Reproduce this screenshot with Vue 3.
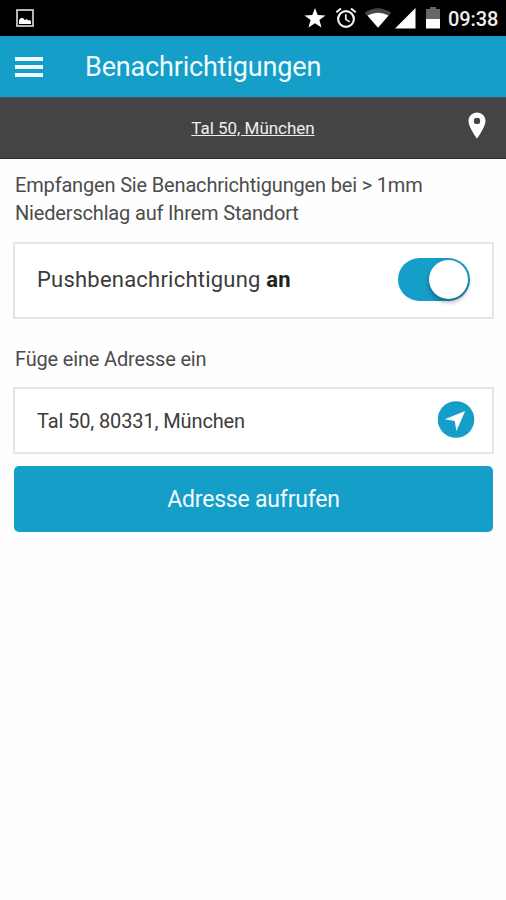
<script setup>
import { ref, computed } from 'vue';

const pushEnabled = ref(true);
const address = ref('Tal 50, 80331, München');

const pushState = computed(() => (pushEnabled.value ? 'an' : 'aus'));

function togglePush() {
  pushEnabled.value = !pushEnabled.value;
}
</script>

<template>
  <div class="screen">
    <div class="status-bar">
      <svg class="picture" width="18" height="18" viewBox="0 0 18 18">
        <rect x="1" y="1" width="16" height="16" fill="none" stroke="#c8c8c8" stroke-width="1.8" />
        <path d="M3 15v-4l2-2h2l2 2.200L10.500 10l2 1.500 1.500-.5 1 1.200V15z" fill="#fff" />
      </svg>
      <div class="status-icons">
        <svg class="star" width="22" height="20" viewBox="0 0 22 20">
          <path d="M11 0l2.700 7.100 7.800.3-6.100 4.700 2.100 7.400L11 15.300l-6.500 4.200 2.100-7.400L.5 7.400l7.800-.3z" fill="#fff" />
        </svg>
        <svg class="alarm" width="22" height="22" viewBox="0 0 22 22" fill="none" stroke="#f0f0f0">
          <circle cx="11" cy="12" r="7.900" stroke-width="2.200" />
          <path d="M1.300 5.300L6 1.400M20.700 5.300L16 1.400" stroke-width="2" />
          <path d="M10.800 7.200v5.200l3.900 2.500" stroke-width="1.700" />
        </svg>
        <svg class="wifi" width="28" height="20" viewBox="0 0 28 20">
          <path d="M.7 4.800Q14-4.300 27.300 4.800L14 19.500z" fill="#484848" />
          <path d="M3.500 7.600Q14 2 24.500 7.600L14 19.800z" fill="#fff" />
        </svg>
        <svg class="signal" width="21" height="21" viewBox="0 0 21 21">
          <path d="M20.500 0v20.500H0z" fill="#fff" />
        </svg>
        <svg class="battery" width="14" height="22" viewBox="0 0 14 22">
          <path d="M0 2h4V0h6v2h4v10H0z" fill="#666" />
          <path d="M0 12h14v9.500H0z" fill="#fff" />
        </svg>
        <span class="clock">09:38</span>
      </div>
    </div>

    <header class="app-bar">
      <button class="menu">
        <span></span>
        <span></span>
        <span></span>
      </button>
      <h1>Benachrichtigungen</h1>
    </header>

    <div class="location-bar">
      <a class="location">Tal 50, München</a>
      <svg class="pin" width="18" height="27" viewBox="0 0 18 27">
        <path d="M9 .5C4.200.5.500 4.200.500 8.900.500 15 9 26.500 9 26.500S17.500 15 17.500 8.900C17.500 4.200 13.800.5 9 .5zm0 5.200a3.200 3.200 0 1 1 0 6.400 3.200 3.200 0 0 1 0-6.400z" fill="#fff" />
      </svg>
    </div>

    <main>
      <p class="intro">
        Empfangen Sie Benachrichtigungen bei &gt; 1mm<br>
        Niederschlag auf Ihrem Standort
      </p>

      <div class="box push-box">
        <span class="push-label">Pushbenachrichtigung <b>{{ pushState }}</b></span>
        <button class="switch" :class="{ on: pushEnabled }" @click="togglePush">
          <span class="knob"></span>
        </button>
      </div>

      <p class="label">Füge eine Adresse ein</p>

      <div class="box address-box">
        <input v-model="address" type="text">
        <svg class="locate" width="37" height="37" viewBox="0 0 37 37">
          <circle cx="18" cy="18.500" r="18.300" fill="#159fc8" />
          <path d="M27.200 10L6.800 18.200l9.900 1.800 1.700 10z" fill="#fff" />
        </svg>
      </div>

      <button class="submit">Adresse aufrufen</button>
    </main>
  </div>
</template>

<style>
body {
  margin: 0;
  background: #fff;
}
</style>

<style scoped>
.screen {
  width: 506px;
  height: 900px;
  overflow: hidden;
  background: #fefefe;
  font-family: Roboto, "Liberation Sans", sans-serif;
  color: #4c4c4c;
}

button {
  border: 0;
  padding: 0;
  font-family: inherit;
}

svg {
  display: block;
  flex: none;
}

.status-bar {
  display: flex;
  justify-content: space-between;
  align-items: center;
  height: 36px;
  box-sizing: border-box;
  padding: 0 8px 0 16px;
  background: #000;
}

.status-icons {
  display: flex;
  align-items: center;
}

.alarm {
  margin-left: 9px;
}

.wifi {
  margin-left: 7px;
}

.signal {
  margin-left: 3px;
}

.battery {
  margin-left: 10px;
}

.clock {
  width: 50px;
  margin-left: 8px;
  padding-top: 2px;
  font-size: 20px;
  font-weight: 500;
  line-height: 24px;
  letter-spacing: -0.1px;
  color: #eee;
  white-space: nowrap;
}

.app-bar {
  display: flex;
  align-items: center;
  height: 61px;
  box-sizing: border-box;
  padding-left: 15px;
  background: #159fc8;
}

.menu {
  display: flex;
  flex-direction: column;
  gap: 4px;
  width: 28px;
  padding-top: 1px;
  background: none;
}

.menu span {
  height: 4px;
  background: #eefaff;
}

h1 {
  margin: 0 0 0 42px;
  font-size: 27px;
  font-weight: 400;
  line-height: 32px;
  letter-spacing: -0.17px;
  color: #f0fbff;
}

.location-bar {
  display: grid;
  grid-template-columns: 1fr auto 1fr;
  align-items: center;
  height: 62px;
  box-sizing: border-box;
  padding: 0 20px 2px;
  border-top: 1px solid #3a5561;
  border-bottom: 1px solid #2c2c2c;
  background: #444;
}

.location {
  grid-column: 2;
  padding-top: 1px;
  font-size: 17px;
  letter-spacing: -0.03px;
  color: #eee;
  text-decoration: underline;
}

.pin {
  justify-self: end;
  margin-bottom: 4px;
}

main {
  padding: 12px 12px 0 13px;
}

p {
  margin: 0 0 0 2px;
  font-size: 20px;
  line-height: 28px;
  letter-spacing: -0.17px;
}

.box {
  display: flex;
  align-items: center;
  justify-content: space-between;
  box-sizing: border-box;
  border: 2px solid #e5e5e5;
  background: #fff;
}

.push-box {
  height: 77px;
  margin-top: 15px;
  padding: 0 22px 2px;
}

.push-label {
  font-size: 22px;
  letter-spacing: 0.22px;
  color: #3c3c3c;
}

.push-label b {
  font-weight: 700;
  color: #222;
}

.switch {
  display: flex;
  align-items: center;
  width: 72px;
  height: 43px;
  box-sizing: border-box;
  padding: 0 2px;
  border-radius: 22px;
  background: #ccc;
}

.switch.on {
  justify-content: flex-end;
  background: #159fc8;
}

.knob {
  width: 39px;
  height: 39px;
  border-radius: 50%;
  background: #fff;
  box-shadow: 0 3px 5px rgba(0, 0, 0, 0.35);
}

.label {
  margin-top: 26px;
}

.address-box {
  height: 67px;
  margin-top: 14px;
  padding: 0 17px 0 22px;
}

.locate {
  margin-bottom: 2px;
}

input {
  flex: 1;
  min-width: 0;
  padding: 0;
  border: 0;
  outline: none;
  background: none;
  font-family: inherit;
  font-size: 20px;
  letter-spacing: -0.12px;
  color: #3c3c3c;
}

.submit {
  display: block;
  width: 479px;
  height: 66px;
  margin: 12px 0 0 1px;
  border-radius: 5px;
  background: #159fc8;
  font-size: 23px;
  letter-spacing: -0.2px;
  color: #f0fbff;
}
</style>
